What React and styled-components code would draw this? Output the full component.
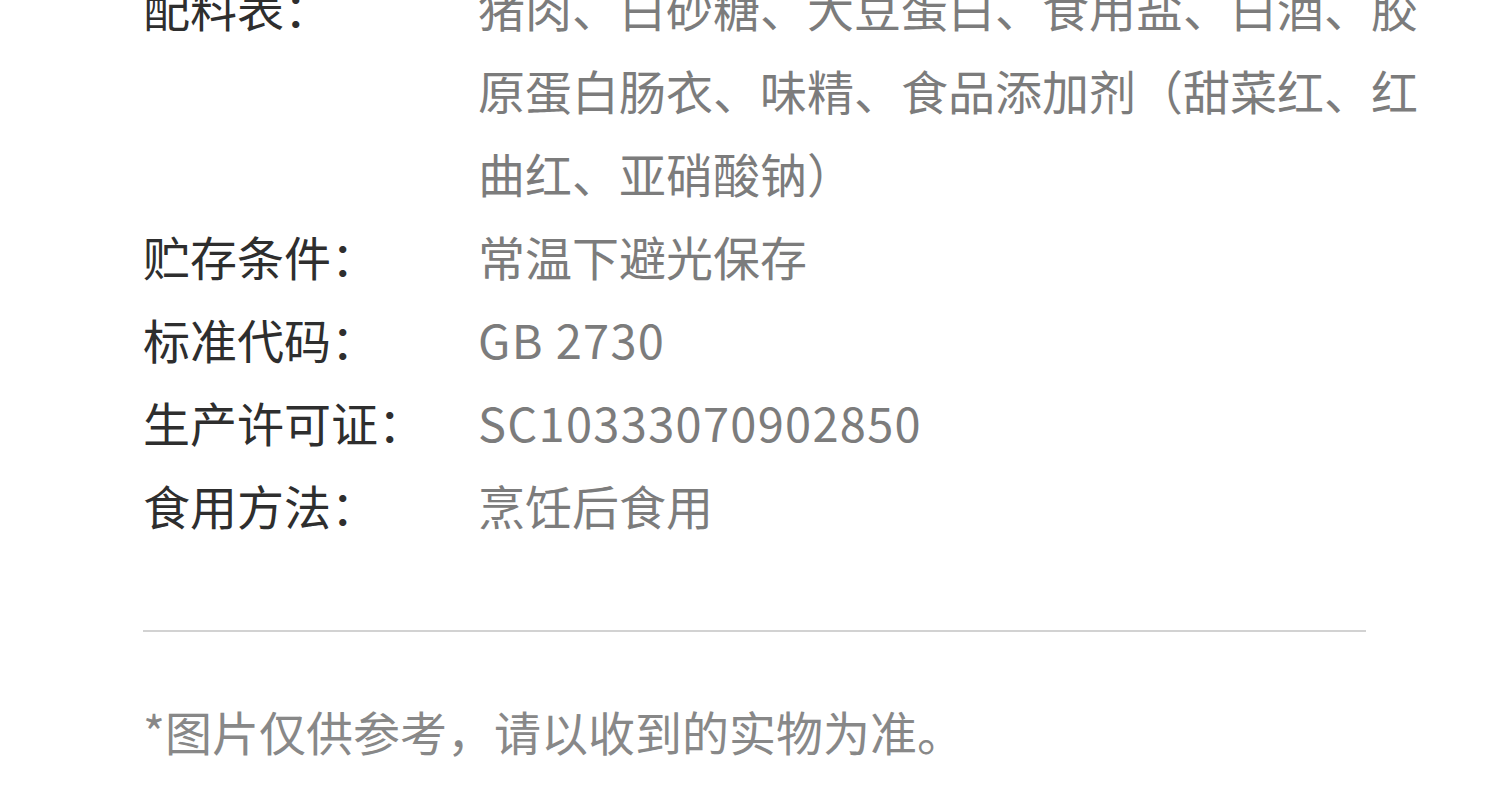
import React from 'react';
import styled, { createGlobalStyle } from 'styled-components';

const GlobalStyle = createGlobalStyle`
    html, body {
        margin: 0;
        padding: 0;
        background: #ffffff;
        overflow: hidden;
    }
    body {
        font-family: "Noto Sans CJK SC", "Noto Sans", sans-serif;
    }
`

const Page = styled.div`
    width: 1500px;
    height: 808px;
    padding-left: 143px;
    box-sizing: border-box;
`

const InfoList = styled.div`
    display: flex;
    flex-direction: column;
    margin-top: -35px;
`

const Row = styled.div`
    display: grid;
    grid-template-columns: 335px 950px;
    font-size: 47px;
    line-height: 83px;
`

const Label = styled.div`
    color: #2e2e2e;
`

const Value = styled.div`
    color: #7c7c7c;
    letter-spacing: ${(p) => (p.$latin ? '1.3px' : '0')};
`

const Divider = styled.hr`
    width: 1223px;
    margin: 84px 0 0 0;
    border: none;
    border-top: 2px solid #d2d2d2;
`

const Note = styled.p`
    margin: 66px 0 0 0;
    font-size: 47px;
    line-height: 66px;
    color: #888888;
`

const rows = [
    { label: '配料表：', value: '猪肉、白砂糖、大豆蛋白、食用盐、白酒、胶原蛋白肠衣、味精、食品添加剂（甜菜红、红曲红、亚硝酸钠）' },
    { label: '贮存条件：', value: '常温下避光保存' },
    { label: '标准代码：', value: 'GB 2730', latin: true },
    { label: '生产许可证：', value: 'SC10333070902850', latin: true },
    { label: '食用方法：', value: '烹饪后食用' },
];

function App() {
    return (
        <Page>
            <GlobalStyle />
            <InfoList>
                {rows.map((r) => (
                    <Row key={r.label}>
                        <Label>{r.label}</Label>
                        <Value $latin={r.latin}>{r.value}</Value>
                    </Row>
                ))}
            </InfoList>
            <Divider />
            <Note>*图片仅供参考，请以收到的实物为准。</Note>
        </Page>
    );
}

export default App;
